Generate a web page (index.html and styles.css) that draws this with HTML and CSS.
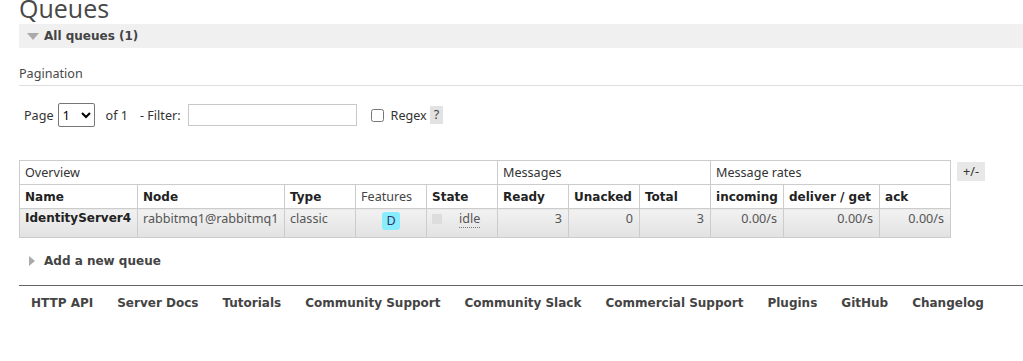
FILE: index.html
```html
<!DOCTYPE html>
<html lang="en">
<head>
    <meta charset="UTF-8">
    <title>RabbitMQ Management - Queues</title>
    <link rel="stylesheet" href="styles.css">
</head>
<body>
    <div class="main">
        <h1>Queues</h1>
        <div class="section">
            <h2 class="section-head"><span class="tri-down"></span>All queues (1)</h2>
            <div class="section-body">
                <h3 class="sub-head">Pagination</h3>
                <div class="pager">
                    <label>Page</label>
                    <select class="page-select"><option>1</option></select>
                    <span class="of">of 1</span>
                    <label>- Filter:</label>
                    <input type="text" class="filter">
                    <input type="checkbox" class="regex-box">
                    <label>Regex</label>
                    <span class="help">?</span>
                </div>

                <div class="table-wrap">
                    <table class="list">
                        <colgroup>
                            <col class="w-name">
                            <col class="w-node">
                            <col class="w-71">
                            <col class="w-71">
                            <col class="w-71">
                            <col class="w-71">
                            <col class="w-71">
                            <col class="w-71">
                            <col class="w-in">
                            <col class="w-get">
                            <col class="w-71">
                        </colgroup>
                        <thead>
                            <tr class="group">
                                <th colspan="5">Overview</th>
                                <th colspan="3">Messages</th>
                                <th colspan="3">Message rates</th>
                            </tr>
                            <tr class="cols">
                                <th>Name</th>
                                <th>Node</th>
                                <th>Type</th>
                                <th class="plain">Features</th>
                                <th>State</th>
                                <th>Ready</th>
                                <th>Unacked</th>
                                <th>Total</th>
                                <th>incoming</th>
                                <th>deliver / get</th>
                                <th>ack</th>
                            </tr>
                        </thead>
                        <tbody>
                            <tr>
                                <td class="name">IdentityServer4</td>
                                <td>rabbitmq1@rabbitmq1</td>
                                <td>classic</td>
                                <td class="center"><abbr class="badge">D</abbr></td>
                                <td class="state"><span class="square"></span><abbr class="idle">idle</abbr></td>
                                <td class="r">3</td>
                                <td class="r">0</td>
                                <td class="r">3</td>
                                <td class="r">0.00/s</td>
                                <td class="r">0.00/s</td>
                                <td class="r">0.00/s</td>
                            </tr>
                        </tbody>
                    </table>
                    <span class="toggle">+/-</span>
                </div>
            </div>
        </div>

        <div class="section">
            <h2 class="section-head closed"><span class="tri-right"></span>Add a new queue</h2>
        </div>
    </div>

    <div class="footer">
        <ul>
            <li><a href="#">HTTP API</a></li>
            <li><a href="#">Server Docs</a></li>
            <li><a href="#">Tutorials</a></li>
            <li><a href="#">Community Support</a></li>
            <li><a href="#">Community Slack</a></li>
            <li><a href="#">Commercial Support</a></li>
            <li><a href="#">Plugins</a></li>
            <li><a href="#">GitHub</a></li>
            <li><a href="#">Changelog</a></li>
        </ul>
    </div>
</body>
</html>
```

FILE: styles.css
```css
body {
    margin: 0;
    font-family: "Noto Sans", "DejaVu Sans", sans-serif;
    font-size: 12.6px;
    color: #484848;
    background: #fff;
}
.main {
    padding: 0 0 0 19px;
}
h1 {
    margin: -4px 0 0 0;
    height: 25px;
    font-family: "Open Sans", sans-serif;
    font-weight: normal;
    font-size: 25px;
    line-height: 25px;
    color: #484848;
}
.section-head {
    display: flex;
    align-items: center;
    height: 24px;
    margin: 3px 0 0 0;
    padding: 0 0 0 8px;
    background: #f0f0f0;
    font-family: "DejaVu Sans", sans-serif;
    font-size: 12px;
    font-weight: bold;
    color: #444;
}
.section-head.closed {
    background: none;
    margin-top: 11px;
}
.tri-down {
    width: 0;
    height: 0;
    border-left: 6px solid transparent;
    border-right: 6px solid transparent;
    border-top: 7px solid #aaa;
    margin-right: 5px;
}
.tri-right {
    width: 0;
    height: 0;
    border-top: 5px solid transparent;
    border-bottom: 5px solid transparent;
    border-left: 6px solid #aaa;
    margin: 0 9px 0 2px;
}
.sub-head {
    margin: 18px 0 0 0;
    padding-bottom: 3px;
    border-bottom: 1px solid #ddd;
    font-size: 12.6px;
    font-weight: normal;
    line-height: 16px;
    color: #484848;
}
.pager {
    display: flex;
    align-items: center;
    margin: 17px 0 0 5px;
    height: 24px;
    color: #333;
}
.page-select {
    margin: 0 11px 0 4px;
    width: 37px;
    height: 24px;
    font-family: "Noto Sans", sans-serif;
    font-size: 13px;
    border: 1px solid #767676;
    border-radius: 2px;
    background: #fff;
}
.of {
    margin-right: 12px;
}
.filter {
    margin: 0 14px 0 7px;
    width: 165px;
    height: 18px;
    border: 1px solid #c8c8c8;
    padding: 1px;
}
.regex-box {
    margin: 0 7px 0 0;
    width: 13px;
    height: 13px;
}
.help {
    margin-left: 3px;
    padding: 0 4px;
    background: #e2e2e2;
    line-height: 18px;
    color: #444;
}
.table-wrap {
    display: flex;
    align-items: flex-start;
    margin-top: 33px;
}
.list {
    border-collapse: collapse;
    width: 932px;
    table-layout: fixed;
}
.w-name { width: 118px; }
.w-node { width: 147px; }
.w-71 { width: 71px; }
.w-in { width: 73px; }
.w-get { width: 96px; }
.list th, .list td {
    border: 1px solid #ccc;
    padding: 0 5px;
    text-align: left;
    white-space: nowrap;
    overflow: hidden;
}
.list .group th {
    height: 23px;
    font-weight: normal;
    color: #333;
}
.list .cols th {
    height: 23px;
    font-family: "DejaVu Sans", sans-serif;
    font-size: 12px;
    font-weight: bold;
    color: #222;
}
.list .cols th.plain {
    font-family: "Noto Sans", sans-serif;
    font-size: 12.6px;
    font-weight: normal;
    color: #444;
}
.list tbody td {
    height: 26px;
    background: linear-gradient(#f2f2f2, #e2e2e2);
    color: #555;
    vertical-align: top;
    padding-top: 1px;
}
.list td.name {
    font-family: "DejaVu Sans", sans-serif;
    font-size: 12px;
    font-weight: bold;
    color: #222;
    padding-top: 2px;
}
.list td.r {
    text-align: right;
    padding-right: 6px;
}
.list td.center {
    text-align: center;
}
.badge {
    display: inline-block;
    margin-top: 2px;
    padding: 0 4px;
    line-height: 18px;
    background: #88eeff;
    border-radius: 3px;
    color: #336;
    text-decoration: none;
}
.state {
    padding-left: 5px;
}
.square {
    display: inline-block;
    width: 10px;
    height: 10px;
    background: #ddd;
    margin: 4px 17px 0 0;
    vertical-align: top;
}
.idle {
    text-decoration: none;
    border-bottom: 1px dotted #777;
    color: #555;
}
.toggle {
    margin: 2px 0 0 6px;
    padding: 0 6px;
    line-height: 19px;
    background: #e8e8e8;
    color: #333;
}
.footer {
    margin: 12px 0 0 19px;
    border-top: 1px solid #666;
}
.footer ul {
    list-style: none;
    margin: 0;
    padding: 8px 0 0 0;
    display: flex;
}
.footer li {
    padding: 0 12px;
}
.footer a {
    font-family: "DejaVu Sans", sans-serif;
    font-size: 12px;
    font-weight: bold;
    color: #444;
    text-decoration: none;
    line-height: 18px;
}
```
